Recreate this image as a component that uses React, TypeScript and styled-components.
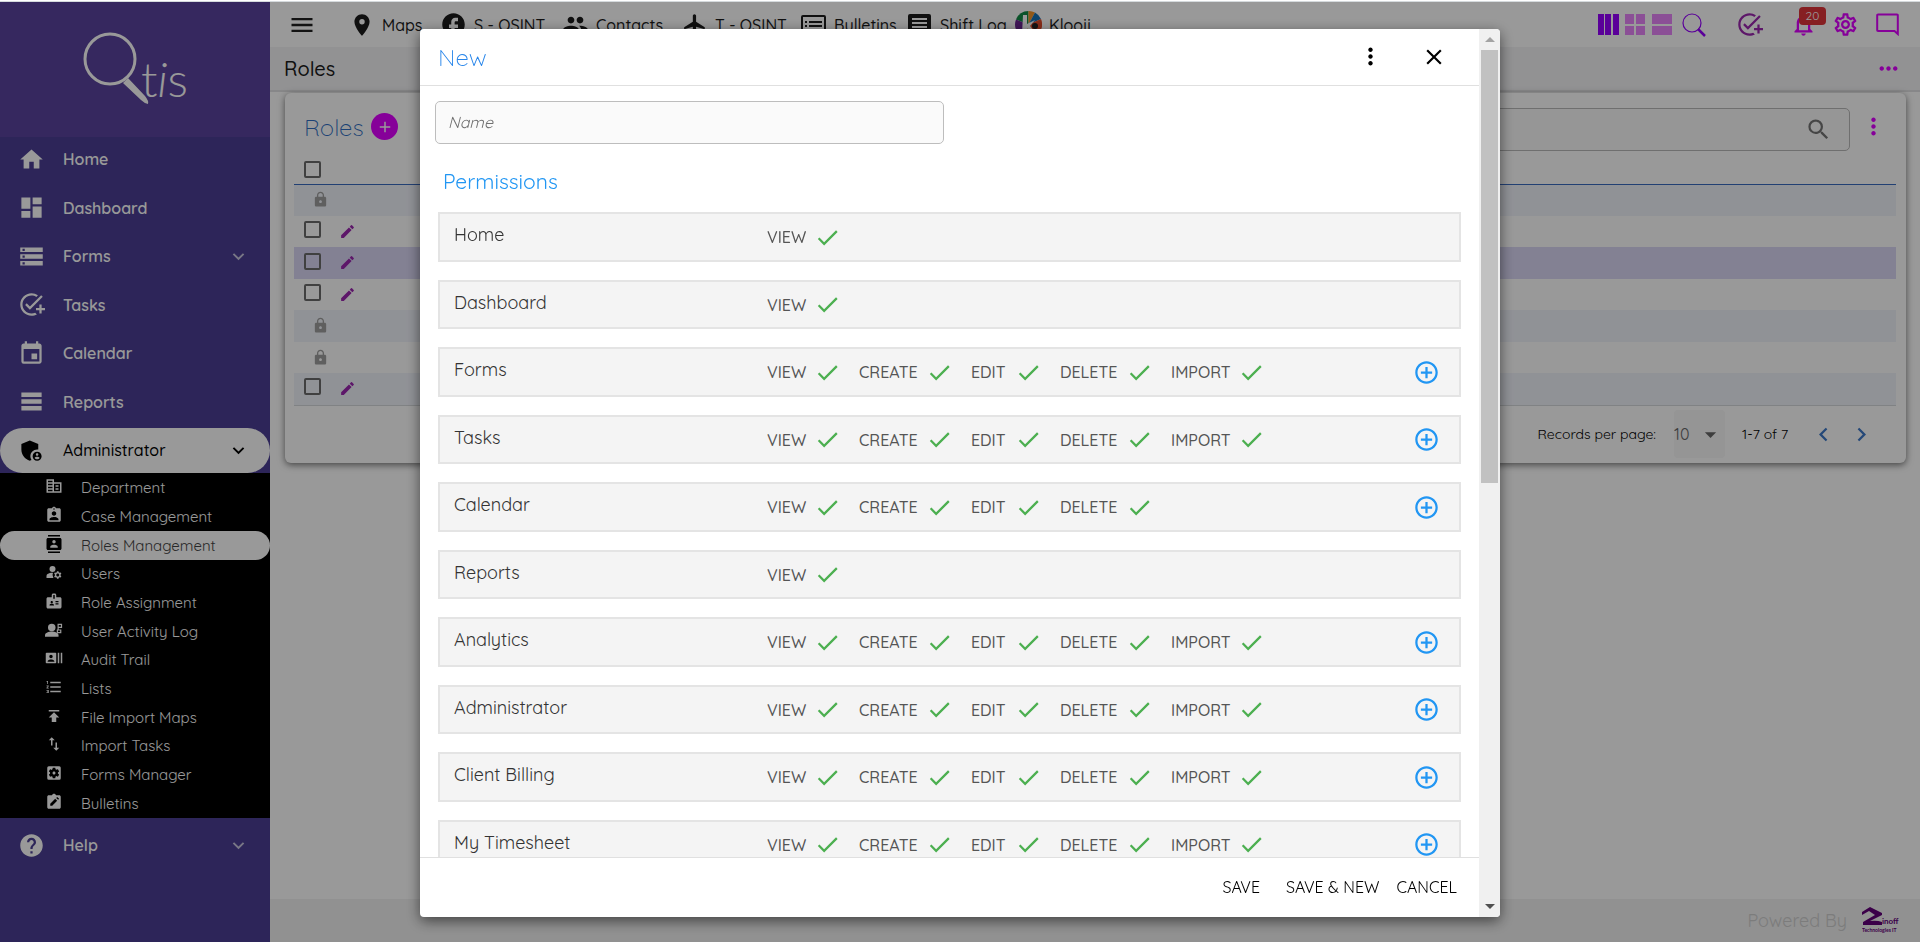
import React from "react";
import styled, { createGlobalStyle } from "styled-components";
import {
  MdAddCircleOutline, MdAdd, MdAddTask, MdAdminPanelSettings, MdArrowDropDown, MdAssignmentInd, MdBadge,
  MdCheck, MdChevronLeft, MdChevronRight, MdClose, MdContacts, MdCorporateFare, MdDashboard, MdEdit,
  MdEvent, MdExpandMore, MdFacebook, MdFlight, MdFormatListNumbered, MdGroup, MdHelp, MdHome,
  MdImportExport, MdLocationOn, MdLock, MdManageAccounts, MdMenu, MdMoreHoriz, MdMoreVert,
  MdOutlineNotifications, MdOutlineSettings, MdPublish, MdRecentActors, MdSearch,
  MdSettingsApplications, MdStorage, MdTableRows,
} from "react-icons/md";

const Global = createGlobalStyle`
  *, *::before, *::after { box-sizing: border-box; }
  html, body, #root { height: 100%; margin: 0; }
  body {
    background: #fff;
    color: #212121;
    font-family: Quicksand, Lato, "Open Sans", sans-serif;
    font-size: 16px;
    overflow: hidden;
  }
  button, input, select { font: inherit; color: inherit; }
  button { background: none; border: 0; padding: 0; cursor: pointer; }
  svg { display: block; flex: none; }
`;

const Page = styled.div`
  height: 100vh;
  display: flex;
  flex-direction: column;
`;
const TopStrip = styled.div`
  flex: none;
  height: 2px;
  border-bottom: 1px solid #d5dadd;
`;
const Frame = styled.div`
  flex: 1;
  min-height: 0;
  display: flex;
`;

/* ---------- side bar ---------- */
const Sidebar = styled.aside`
  flex: none;
  width: 270px;
  background: #4b3f94;
  color: #fff;
`;
const Brand = styled.div`
  height: 135px;
  background: #5a449e;
  display: flex;
  justify-content: center;
  padding-top: 26px;
`;
const MainNav = styled.nav`
  height: 336px;
  display: flex;
  flex-direction: column;
  justify-content: space-between;
`;
const NavItem = styled.a<{ $active?: boolean }>`
  height: 45px;
  padding: 0 20px 1px 18px;
  display: flex;
  align-items: center;
  gap: 18px;
  border-radius: 23px;
  font-size: 16px;
  font-weight: ${(p) => (p.$active ? 500 : 600)};
  color: ${(p) => (p.$active ? "#000" : "#fff")};
  background: ${(p) => (p.$active ? "#fff" : "transparent")};
  text-decoration: none;
`;
const NavText = styled.span`
  flex: 1;
`;
const Unfold = styled(MdExpandMore)<{ $dim?: boolean }>`
  opacity: ${(p) => (p.$dim ? 0.7 : 1)};
`;
const SubNav = styled.nav`
  height: 345px;
  margin-bottom: 5px;
  padding-top: 1px;
  background: #000;
  display: flex;
  flex-direction: column;
`;
const SubItem = styled.a<{ $active?: boolean }>`
  flex: 1;
  padding: 0 0 1px 45px;
  display: flex;
  align-items: center;
  gap: 18px;
  border-radius: 15px;
  font-size: 15px;
  color: ${(p) => (p.$active ? "#444" : "#fff")};
  background: ${(p) => (p.$active ? "#fff" : "transparent")};
  text-decoration: none;
  svg { color: ${(p) => (p.$active ? "#000" : "#fff")}; margin-bottom: 3px; }
`;

/* ---------- main column ---------- */
const Main = styled.div`
  flex: 1;
  min-width: 0;
  display: flex;
  flex-direction: column;
`;
const HeaderBar = styled.header`
  flex: none;
  height: 45px;
  padding: 0 19px 0 18px;
  display: flex;
  align-items: center;
`;
const IconButton = styled.button<{ $color?: string }>`
  display: flex;
  align-items: center;
  justify-content: center;
  color: ${(p) => p.$color ?? "#212121"};
`;
const Shortcuts = styled.nav`
  display: flex;
  align-items: center;
  margin-left: 32px;
`;
const Shortcut = styled.a<{ $width: number }>`
  width: ${(p) => p.$width}px;
  display: flex;
  align-items: center;
  gap: 7px;
  color: #1c1c1c;
  font-size: 16px;
  font-weight: 500;
  text-decoration: none;
  white-space: nowrap;
`;
const IconSlot = styled.span`
  width: 27px;
  display: flex;
  justify-content: center;
`;
const Tools = styled.div`
  margin-left: auto;
  display: flex;
  align-items: center;
`;
const ViewTools = styled.div`
  display: flex;
  align-items: center;
  gap: 6px;
  margin-right: 30px;
`;
const FindButton = styled(IconButton)`
  margin-left: 3px;
`;
const UserTools = styled.div`
  display: flex;
  align-items: center;
  gap: 15px;
`;
const ToolButton = styled(IconButton)`
  width: 27px;
`;
const BellButton = styled(ToolButton)`
  position: relative;
  margin-left: 12px;
`;
const Badge = styled.span`
  position: absolute;
  left: 9px;
  top: -4px;
  width: 27px;
  height: 18px;
  border-radius: 4px;
  background: #e0343a;
  color: #fff;
  font-size: 12px;
  line-height: 17px;
  text-align: center;
`;
const SubHeader = styled.div`
  flex: none;
  height: 45px;
  padding: 0 18px 0 14px;
  display: flex;
  align-items: center;
  justify-content: space-between;
  background: #f3f3f5;
  border-bottom: 2px solid #e2e2e4;
`;
const PageTitle = styled.h1`
  margin: 0;
  font-size: 20px;
  font-weight: 500;
  color: #1c1c1c;
`;
const Content = styled.main`
  flex: 1;
  padding: 1px 14px 0 15px;
`;
const Card = styled.section`
  padding: 15px 10px 0 9px;
  border-radius: 6px;
  background: #fff;
  box-shadow: 0 2px 7px rgba(0, 0, 0, 0.55);
`;
const CardBar = styled.div`
  height: 43px;
  padding: 0 9px 0 10px;
  display: flex;
`;
const BarSide = styled.div`
  height: 37px;
  display: flex;
  align-items: center;
`;
const CardTitle = styled.h2`
  margin: 0;
  width: 67px;
  font-size: 24px;
  font-weight: 300;
  color: #2f6fc4;
`;
const AddButton = styled.button`
  width: 27px;
  height: 27px;
  border-radius: 50%;
  background: #df00ff;
  color: #fff;
  display: flex;
  align-items: center;
  justify-content: center;
`;
const SearchBox = styled.label`
  margin-left: auto;
  margin-right: 10px;
  width: 600px;
  height: 43px;
  padding: 0 17px 0 12px;
  display: flex;
  align-items: center;
  border: 1px solid #b9b9b9;
  border-radius: 5px;
  background: #fafafa;
  color: #757575;
  input { flex: 1; border: 0; outline: 0; background: none; }
`;
const Grid = styled.table`
  width: 100%;
  border-collapse: collapse;
  th { height: 33px; padding: 8px 0 0 10px; border-bottom: 1px solid #3a6cc0; text-align: left; }
  td { padding: 0 0 1px 10px; }
  tbody tr { height: 31px; }
  tbody tr:nth-child(odd) { height: 32px; background: #f1f4fb; }
  tbody tr:last-child { border-bottom: 1px solid #d6d9dc; }
`;
const GridRow = styled.tr<{ $selected?: boolean }>`
  &&&& { ${(p) => p.$selected && "background: #dad7f5;"} }
`;
const RowTools = styled.div`
  display: flex;
  align-items: center;
  gap: 18px;
  color: #9c27b0;
`;
const LockMark = styled.div`
  padding-left: 8px;
  color: #9e9e9e;
`;
const Tick = styled.input`
  appearance: none;
  display: block;
  width: 17px;
  height: 17px;
  margin: 0 0 3px;
  border: 2px solid #6b6b6b;
  border-radius: 2px;
`;
const Pager = styled.div`
  height: 57px;
  padding-right: 16px;
  display: flex;
  align-items: center;
  justify-content: flex-end;
  font-size: 14px;
  color: #000;
`;
const PageSize = styled.span`
  position: relative;
  width: 51px;
  height: 48px;
  margin: 0 17px 0 18px;
  border-radius: 4px;
  background: #f8f8f8;
  display: flex;
  align-items: center;
  color: #666;
  select {
    width: 100%;
    height: 100%;
    appearance: none;
    border: 0;
    padding: 0;
    background: none;
    font-size: 16px;
  }
  svg { position: absolute; right: 1px; pointer-events: none; }
`;
const Turn = styled(IconButton)`
  width: 38px;
  color: #3d78c8;
`;
const PageCount = styled.span`
  width: 62px;
`;
const Footer = styled.footer`
  flex: none;
  height: 43px;
  padding-right: 20px;
  display: flex;
  align-items: center;
  justify-content: flex-end;
  gap: 15px;
  background: #f2f2f2;
  color: #cfcfcf;
  font-size: 18px;
`;

/* ---------- dialog ---------- */
const Backdrop = styled.div`
  position: fixed;
  inset: 2px 0 0;
  padding: 27px 20px 25px;
  display: flex;
  justify-content: center;
  background: rgba(0, 0, 0, 0.4);
`;
const Dialog = styled.div`
  width: 100%;
  max-width: 1080px;
  display: flex;
  border-radius: 4px;
  overflow: hidden;
  background: #fff;
  box-shadow: 0 4px 14px rgba(0, 0, 0, 0.55);
`;
const DialogMain = styled.div`
  flex: 1;
  min-width: 0;
  display: flex;
  flex-direction: column;
`;
const DialogHead = styled.div`
  flex: none;
  height: 57px;
  padding: 0 32px 1px 18px;
  display: flex;
  align-items: center;
  gap: 37px;
  border-bottom: 1px solid #e0e0e0;
`;
const DialogTitle = styled.h2`
  margin: 0;
  flex: 1;
  font-size: 24px;
  font-weight: 300;
  color: #2986ea;
`;
const DialogBody = styled.div`
  flex: 1;
  min-height: 0;
  overflow: hidden;
  padding: 15px 18px 0;
`;
const NameInput = styled.input`
  display: block;
  width: 509px;
  height: 43px;
  margin-left: -3px;
  padding: 0 12px 2px;
  border: 1px solid #bdbdbd;
  border-radius: 5px;
  background: #fafafa;
  font-size: 16px;
  &::placeholder { color: #707070; font-style: italic; opacity: 1; }
`;
const SectionTitle = styled.h3`
  margin: 24px 0 18px 5px;
  font-size: 21px;
  line-height: 26px;
  font-weight: 400;
  color: #2196f3;
`;
const Permissions = styled.div`
  display: flex;
  flex-direction: column;
  gap: 18px;
`;
const PermissionRow = styled.div`
  flex: none;
  height: 50px;
  padding: 0 19px 0 14px;
  display: flex;
  align-items: center;
  border: 2px solid #e4e4e4;
  background: #f4f4f4;
  &:nth-child(even) { height: 49px; }
`;
const Section = styled.span`
  flex: none;
  width: 313px;
  padding-bottom: 5px;
  font-size: 18px;
  color: #333;
`;
const Grants = styled.div`
  flex: 1;
  display: grid;
  grid-template-columns: 92px 112px 89px 111px 112px;
`;
const Grant = styled.button`
  padding-right: 18px;
  display: flex;
  align-items: center;
  justify-content: space-between;
  font-size: 16px;
  font-weight: 500;
  color: #555;
  svg { color: #4caf50; }
`;
const DialogFoot = styled.div`
  flex: none;
  height: 60px;
  padding: 0 22px 2px 0;
  display: flex;
  align-items: center;
  justify-content: flex-end;
  border-top: 1px solid #e0e0e0;
`;
const TextButton = styled.button<{ $gap: number }>`
  margin-left: ${(p) => p.$gap}px;
  font-size: 16px;
  color: #000;
`;
const ScrollTrack = styled.div`
  flex: none;
  width: 21px;
  padding: 0 2px;
  display: flex;
  flex-direction: column;
  align-items: center;
  background: #f0f0f0;
`;
const ScrollArrow = styled.span<{ $down?: boolean }>`
  flex: none;
  height: 21px;
  display: flex;
  align-items: center;
  &::before {
    content: "";
    border: 5px solid transparent;
    border-top-width: ${(p) => (p.$down ? "5px" : "0")};
    border-bottom-width: ${(p) => (p.$down ? "0" : "5px")};
    border-${(p) => (p.$down ? "top" : "bottom")}-color: ${(p) => (p.$down ? "#505050" : "#a3a3a3")};
  }
`;
const ScrollRail = styled.div`
  flex: 1;
  width: 100%;
`;
const ScrollThumb = styled.div`
  height: calc(51% + 2px);
  background: #c1c1c1;
`;

/* ---------- drawings ---------- */
const QtisLogo = () => (
  <svg width="110" height="84" viewBox="0 0 110 84" role="img" aria-label="Qtis">
    <circle cx="30" cy="31" r="25" fill="none" stroke="#fff" strokeWidth="3" />
    <path d="M43 55l5-5 17 18q4 5 3 8q-4-1-7-4z" fill="#fff" />
    <text x="61" y="69" fill="#fff" fontFamily="Lato, sans-serif" fontWeight="300" fontSize="48">
      t<tspan fontStyle="italic">i</tspan>s
    </text>
  </svg>
);
const ActivityIcon = ({ size }: { size: number }) => (
  <svg width={size} height={size} viewBox="0 0 24 24" fill="currentColor">
    <circle cx="9" cy="8.500" r="5" />
    <path d="M0 21v-2c0-3.500 5-5 9-5s9 1.500 9 5v2z" />
    <path d="M17.500 12V4.500h4.500v4h-4M16.500 12h4.500v3.500h-4.500z" fill="none" stroke="currentColor" strokeWidth="1.600" />
  </svg>
);
const ClipboardEditIcon = ({ size }: { size: number }) => (
  <svg width={size} height={size} viewBox="0 0 24 24" fill="currentColor" fillRule="evenodd">
    <path d="M19 3h-4.200C14.400 1.800 13.300 1 12 1s-2.400.8-2.800 2H5c-1.100 0-2 .9-2 2v14c0 1.100.9 2 2 2h14c1.100 0 2-.9 2-2V5c0-1.100-.9-2-2-2zM7 17v-2.600l6.600-6.600 2.600 2.600L9.600 17zm10.500-7.900l-2.600-2.600 1.300-1.300 2.600 2.600z" />
  </svg>
);
const BulletinIcon = () => (
  <svg width="25" height="24" viewBox="0 0 25 24" fill="none" stroke="currentColor" strokeWidth="2">
    <rect x="1" y="3" width="23" height="19" rx="1" />
    <path d="M8 9h13M8 13h13M8 17h13" />
    <path d="M4 9h2M4 13h2M4 17h2" />
  </svg>
);
const ShiftLogIcon = () => (
  <svg width="23" height="24" viewBox="0 0 23 24">
    <rect width="23" height="23" y="1" rx="2" fill="currentColor" />
    <path d="M4 6h15M4 10h15M4 14h15M4 18h15" stroke="#fff" strokeWidth="2" />
  </svg>
);
const KloojiIcon = () => (
  <svg width="27" height="27" viewBox="0 0 27 27">
    <path d="M13.500 13.500V0A13.500 13.500 0 0 0 1 8.500z" fill="#128a45" />
    <path d="M13.500 13.500L1 8.500A13.500 13.500 0 0 0 5 24z" fill="#6a2490" />
    <path d="M13.500 13.500V0A13.500 13.500 0 0 1 20 1.500z" fill="#f2952a" />
    <path d="M13.500 13.500L20 1.500A13.500 13.500 0 0 1 26 8z" fill="#1473b8" />
    <path d="M13.500 13.500L26 8A13.500 13.500 0 0 1 22 24z" fill="#e04a2a" />
    <path d="M13.500 13.500L22 24A13.500 13.500 0 0 1 5 24z" fill="#f2952a" />
    <path d="M8 4h4v9l8-4-5 6 6 8h-5l-4-6v6H7z" fill="#fff" />
    <circle cx="20" cy="15" r="3" fill="#222" />
  </svg>
);
const ColumnsIcon = () => (
  <svg width="21" height="21" viewBox="0 0 21 21" fill="#9600ff">
    <path d="M0 0h6v21H0zM7 0h6v21H7zM15 0h6v21h-6z" />
  </svg>
);
const TilesIcon = () => (
  <svg width="21" height="21" viewBox="0 0 21 21" fill="#e884fa">
    <path d="M0 0h9v10H0zM11 0h9v10h-9zM0 12h9v9H0zM11 12h9v9h-9z" />
  </svg>
);
const RowsIcon = () => (
  <svg width="21" height="21" viewBox="0 0 21 21" fill="#e884fa">
    <path d="M0 0h20v10H0zM0 12h20v9H0z" />
  </svg>
);
const ThinSearchIcon = () => (
  <svg width="24" height="24" viewBox="0 0 24 24" fill="none" stroke="#9600ff">
    <circle cx="10" cy="10" r="9" strokeWidth="1.200" />
    <path d="M16 16l7 7" strokeWidth="2.500" />
  </svg>
);
const ChatIcon = () => (
  <svg width="23" height="23" viewBox="0 0 23 23" fill="none" stroke="currentColor" strokeWidth="2">
    <path d="M2 1.500h19a.8.8 0 0 1 .8.8V21l-3.300-3H2a.8.8 0 0 1-.8-.8V2.300a.8.8 0 0 1 .8-.8z" />
  </svg>
);
const ZinoffLogo = () => (
  <svg width="38" height="27" viewBox="0 0 38 27" role="img" aria-label="Zinoff Technologies" fill="#63007a">
    <path d="M0 5L8 0l12 6v2L8 14q7-1 12 1v3H1v-3L13 8 7 4 0 8z" />
    <g fontFamily="Lato, sans-serif" fontWeight="700">
      <text x="20" y="17" fontSize="8">inoff</text>
      <text x="0" y="25" fontSize="5">Technologies IT</text>
    </g>
  </svg>
);

/* ---------- data ---------- */
const mainItems = [
  { text: "Home", Icon: MdHome },
  { text: "Dashboard", Icon: MdDashboard },
  { text: "Forms", Icon: MdStorage, opens: true },
  { text: "Tasks", Icon: MdAddTask },
  { text: "Calendar", Icon: MdEvent },
  { text: "Reports", Icon: MdTableRows },
  { text: "Administrator", Icon: MdAdminPanelSettings, opens: true, active: true },
];
const adminItems = [
  { text: "Department", Icon: MdCorporateFare },
  { text: "Case Management", Icon: MdAssignmentInd },
  { text: "Roles Management", Icon: MdContacts },
  { text: "Users", Icon: MdManageAccounts },
  { text: "Role Assignment", Icon: MdBadge },
  { text: "User Activity Log", Icon: ActivityIcon },
  { text: "Audit Trail", Icon: MdRecentActors },
  { text: "Lists", Icon: MdFormatListNumbered },
  { text: "File Import Maps", Icon: MdPublish },
  { text: "Import Tasks", Icon: MdImportExport },
  { text: "Forms Manager", Icon: MdSettingsApplications },
  { text: "Bulletins", Icon: ClipboardEditIcon },
];
const shortcuts = [
  { text: "Maps", icon: <MdLocationOn size={26} />, width: 92 },
  { text: "S - OSINT", icon: <MdFacebook size={27} />, width: 122 },
  { text: "Contacts", icon: <MdGroup size={27} />, width: 119 },
  { text: "T - OSINT", icon: <MdFlight size={26} />, width: 119 },
  { text: "Bulletins", icon: <BulletinIcon />, width: 106 },
  { text: "Shift Log", icon: <ShiftLogIcon />, width: 109 },
  { text: "Klooji", icon: <KloojiIcon />, width: 80 },
];
const gridRows = ["lock", "edit", "selected", "edit", "lock", "lock", "edit"];
const full = ["VIEW", "CREATE", "EDIT", "DELETE", "IMPORT"];
const permissions: [string, string[], boolean][] = [
  ["Home", ["VIEW"], false],
  ["Dashboard", ["VIEW"], false],
  ["Forms", full, true],
  ["Tasks", full, true],
  ["Calendar", full.slice(0, 4), true],
  ["Reports", ["VIEW"], false],
  ["Analytics", full, true],
  ["Administrator", full, true],
  ["Client Billing", full, true],
  ["My Timesheet", full, true],
];

export default function App() {
  return (
    <>
      <Global />
      <Page>
        <TopStrip />
        <Frame>
          <Sidebar>
            <Brand><QtisLogo /></Brand>
            <MainNav aria-label="Main">
              {mainItems.map(({ text, Icon, opens, active }) => (
                <NavItem key={text} href="#" $active={active}>
                  <Icon size={27} />
                  <NavText>{text}</NavText>
                  {opens && <Unfold size={23} $dim={!active} />}
                </NavItem>
              ))}
            </MainNav>
            <SubNav aria-label="Administrator">
              {adminItems.map(({ text, Icon }) => (
                <SubItem key={text} href="#" $active={text === "Roles Management"}>
                  <Icon size={18} />
                  {text}
                </SubItem>
              ))}
            </SubNav>
            <NavItem href="#">
              <MdHelp size={27} />
              <NavText>Help</NavText>
              <Unfold size={23} $dim />
            </NavItem>
          </Sidebar>

          <Main>
            <HeaderBar>
              <IconButton aria-label="Menu"><MdMenu size={28} /></IconButton>
              <Shortcuts aria-label="Shortcuts">
                {shortcuts.map((s) => (
                  <Shortcut key={s.text} href="#" $width={s.width}>
                    <IconSlot>{s.icon}</IconSlot>
                    {s.text}
                  </Shortcut>
                ))}
              </Shortcuts>
              <Tools>
                <ViewTools>
                  <IconButton aria-label="Columns"><ColumnsIcon /></IconButton>
                  <IconButton aria-label="Tiles"><TilesIcon /></IconButton>
                  <IconButton aria-label="Rows"><RowsIcon /></IconButton>
                  <FindButton aria-label="Search"><ThinSearchIcon /></FindButton>
                </ViewTools>
                <UserTools>
                  <ToolButton aria-label="New task" $color="#9c27b0"><MdAddTask size={27} /></ToolButton>
                  <BellButton aria-label="Notifications" $color="#df00ff">
                    <MdOutlineNotifications size={27} />
                    <Badge>20</Badge>
                  </BellButton>
                  <ToolButton aria-label="Settings" $color="#df00ff"><MdOutlineSettings size={27} /></ToolButton>
                  <ToolButton aria-label="Chat" $color="#df00ff"><ChatIcon /></ToolButton>
                </UserTools>
              </Tools>
            </HeaderBar>
            <SubHeader>
              <PageTitle>Roles</PageTitle>
              <IconButton aria-label="Page options" $color="#df00ff"><MdMoreHoriz size={27} /></IconButton>
            </SubHeader>
            <Content>
              <Card>
                <CardBar>
                  <BarSide>
                    <CardTitle>Roles</CardTitle>
                    <AddButton aria-label="Add role"><MdAdd size={18} /></AddButton>
                  </BarSide>
                  <SearchBox>
                    <input aria-label="Search roles" />
                    <MdSearch size={27} />
                  </SearchBox>
                  <BarSide>
                    <IconButton aria-label="Table options" $color="#df00ff"><MdMoreVert size={27} /></IconButton>
                  </BarSide>
                </CardBar>
                <Grid>
                  <thead>
                    <tr><th scope="col"><Tick type="checkbox" aria-label="Select all roles" /></th></tr>
                  </thead>
                  <tbody>
                    {gridRows.map((kind, i) => (
                      <GridRow key={i} $selected={kind === "selected"}>
                        <td>
                          {kind === "lock" ? (
                            <LockMark><MdLock size={17} /></LockMark>
                          ) : (
                            <RowTools>
                              <Tick type="checkbox" aria-label={`Select row ${i + 1}`} />
                              <IconButton aria-label={`Edit row ${i + 1}`} $color="#9c27b0"><MdEdit size={17} /></IconButton>
                            </RowTools>
                          )}
                        </td>
                      </GridRow>
                    ))}
                  </tbody>
                </Grid>
                <Pager>
                  <label htmlFor="page-size">Records per page:</label>
                  <PageSize>
                    <select id="page-size" defaultValue="10"><option>10</option></select>
                    <MdArrowDropDown size={27} />
                  </PageSize>
                  <PageCount>1-7 of 7</PageCount>
                  <Turn aria-label="Previous page"><MdChevronLeft size={27} /></Turn>
                  <Turn aria-label="Next page"><MdChevronRight size={27} /></Turn>
                </Pager>
              </Card>
            </Content>
            <Footer>
              Powered By
              <ZinoffLogo />
            </Footer>
          </Main>
        </Frame>
      </Page>

      <Backdrop>
        <Dialog role="dialog" aria-modal="true" aria-labelledby="dialog-title">
          <DialogMain>
            <DialogHead>
              <DialogTitle id="dialog-title">New</DialogTitle>
              <IconButton aria-label="More" $color="#000"><MdMoreVert size={27} /></IconButton>
              <IconButton aria-label="Close" $color="#000"><MdClose size={26} /></IconButton>
            </DialogHead>
            <DialogBody>
              <NameInput placeholder="Name" aria-label="Name" />
              <SectionTitle>Permissions</SectionTitle>
              <Permissions>
                {permissions.map(([section, grants, expandable]) => (
                  <PermissionRow key={section}>
                    <Section>{section}</Section>
                    <Grants>
                      {grants.map((g) => (
                        <Grant key={g} type="button">
                          {g}
                          <MdCheck size={27} />
                        </Grant>
                      ))}
                    </Grants>
                    {expandable && (
                      <IconButton aria-label={`Expand ${section}`} $color="#2196f3">
                        <MdAddCircleOutline size={27} />
                      </IconButton>
                    )}
                  </PermissionRow>
                ))}
              </Permissions>
            </DialogBody>
            <DialogFoot>
              <TextButton $gap={0}>SAVE</TextButton>
              <TextButton $gap={26}>SAVE &amp; NEW</TextButton>
              <TextButton $gap={17}>CANCEL</TextButton>
            </DialogFoot>
          </DialogMain>
          <ScrollTrack aria-hidden="true">
            <ScrollArrow />
            <ScrollRail><ScrollThumb /></ScrollRail>
            <ScrollArrow $down />
          </ScrollTrack>
        </Dialog>
      </Backdrop>
    </>
  );
}
